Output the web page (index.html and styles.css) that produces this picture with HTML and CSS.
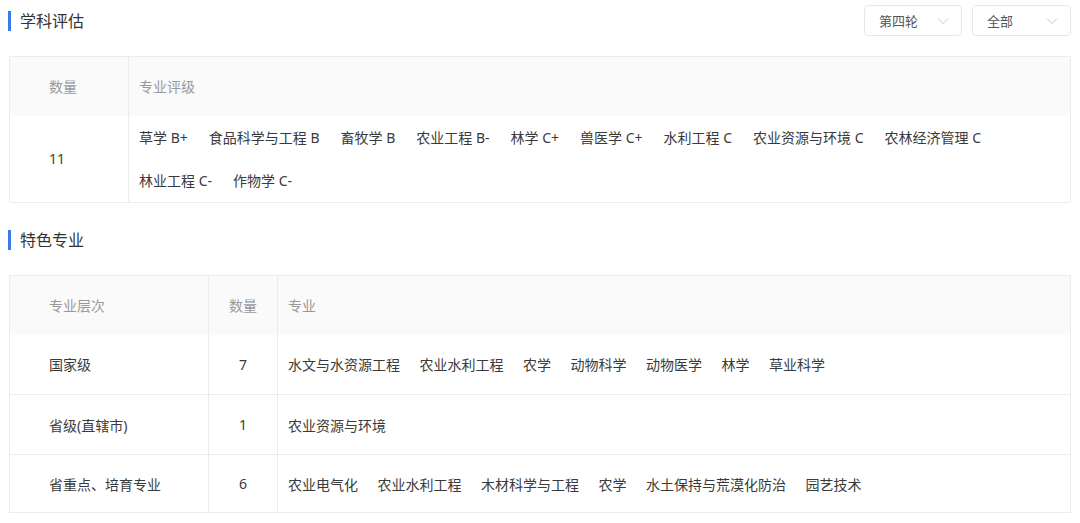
FILE: index.html
```html
<!DOCTYPE html>
<html lang="zh-CN">
<head>
<meta charset="utf-8">
<title>学科评估</title>
<link rel="stylesheet" href="styles.css">
</head>
<body>
<div class="page">
  <div class="section-head">
    <h2 class="section-title">学科评估</h2>
    <div class="filters">
      <div class="select"><span>第四轮</span><svg class="chev" width="12" height="8" viewBox="0 0 12 8"><path d="M1 1.5 L6 6.5 L11 1.5" fill="none" stroke="#c8c8c8" stroke-width="1"/></svg></div>
      <div class="select"><span>全部</span><svg class="chev" width="12" height="8" viewBox="0 0 12 8"><path d="M1 1.5 L6 6.5 L11 1.5" fill="none" stroke="#c8c8c8" stroke-width="1"/></svg></div>
    </div>
  </div>
  <table class="grid grid-eval">
    <colgroup><col class="c-num1"><col></colgroup>
    <thead>
      <tr><th class="pl">数量</th><th class="pc">专业评级</th></tr>
    </thead>
    <tbody>
      <tr>
        <td class="pl">11</td>
        <td class="pc tags tall">
          <span>草学 B+</span><span>食品科学与工程 B</span><span>畜牧学 B</span><span>农业工程 B-</span><span>林学 C+</span><span>兽医学 C+</span><span>水利工程 C</span><span>农业资源与环境 C</span><span>农林经济管理 C</span><span>林业工程 C-</span><span>作物学 C-</span>
        </td>
      </tr>
    </tbody>
  </table>

  <div class="section-head second">
    <h2 class="section-title">特色专业</h2>
  </div>
  <table class="grid grid-feature">
    <colgroup><col class="c-level"><col class="c-count"><col></colgroup>
    <thead>
      <tr><th class="pl">专业层次</th><th class="center">数量</th><th class="pc">专业</th></tr>
    </thead>
    <tbody>
      <tr><td class="pl">国家级</td><td class="center">7</td><td class="pc tags"><span>水文与水资源工程</span><span>农业水利工程</span><span>农学</span><span>动物科学</span><span>动物医学</span><span>林学</span><span>草业科学</span></td></tr>
      <tr><td class="pl">省级(直辖市)</td><td class="center">1</td><td class="pc tags"><span>农业资源与环境</span></td></tr>
      <tr class="last"><td class="pl">省重点、培育专业</td><td class="center">6</td><td class="pc tags"><span>农业电气化</span><span>农业水利工程</span><span>木材科学与工程</span><span>农学</span><span>水土保持与荒漠化防治</span><span>园艺技术</span></td></tr>
    </tbody>
  </table>
</div>
</body>
</html>
```

FILE: styles.css
```css
* { box-sizing: border-box; }
html, body { margin: 0; padding: 0; background: #fff; }
body {
  font-family: "Noto Sans", "Noto Sans CJK SC", "Liberation Sans", sans-serif;
  color: #3a3a3a;
  font-size: 14px;
}
.page { padding: 0 9px 0 8px; }

.section-head {
  display: flex;
  align-items: center;
  justify-content: space-between;
  height: 41px;
}
.section-head.second { margin-top: 16px; }
.section-title {
  margin: 0;
  font-size: 16px;
  font-weight: 400;
  color: #333;
  line-height: 20px;
  padding-left: 9px;
  border-left: 3px solid #3a7bea;
}
.filters { display: flex; gap: 10px; }
.select {
  width: 99px;
  height: 31px;
  border: 1px solid #e8e8e8;
  border-radius: 4px;
  display: flex;
  align-items: center;
  justify-content: space-between;
  padding: 0 12px 0 14px;
  font-size: 13px;
  color: #555;
}
.select:first-child { width: 98px; }

.grid {
  margin-left: 1px;
  width: calc(100% - 1px);
  border-collapse: collapse;
  border: 1px solid #ececec;
  margin-top: 15px;
  table-layout: fixed;
}
.grid th, .grid td {
  border: 1px solid #ececec;
  text-align: left;
  font-weight: 400;
  vertical-align: middle;
  padding: 0;
}
.grid thead th {
  background: #fafafa;
  color: #999;
  height: 59px;
  border-bottom: hidden;
}
.grid tbody td { height: 60px; color: #3a3a3a; }
.grid tbody tr.last td { height: 58px; }
.grid .pl { padding-left: 39px; }
.grid .pc { padding-left: 10px; }
.grid .center { text-align: center; }
.c-num1 { width: 119px; }
.c-level { width: 199px; }
.c-count { width: 69px; }

.tags span { margin-right: 19.5px; white-space: nowrap; }
.grid-eval .tags span { margin-right: 21px; }
.grid tbody tr td.tags.tall { line-height: 43px; height: 87px; }
```
